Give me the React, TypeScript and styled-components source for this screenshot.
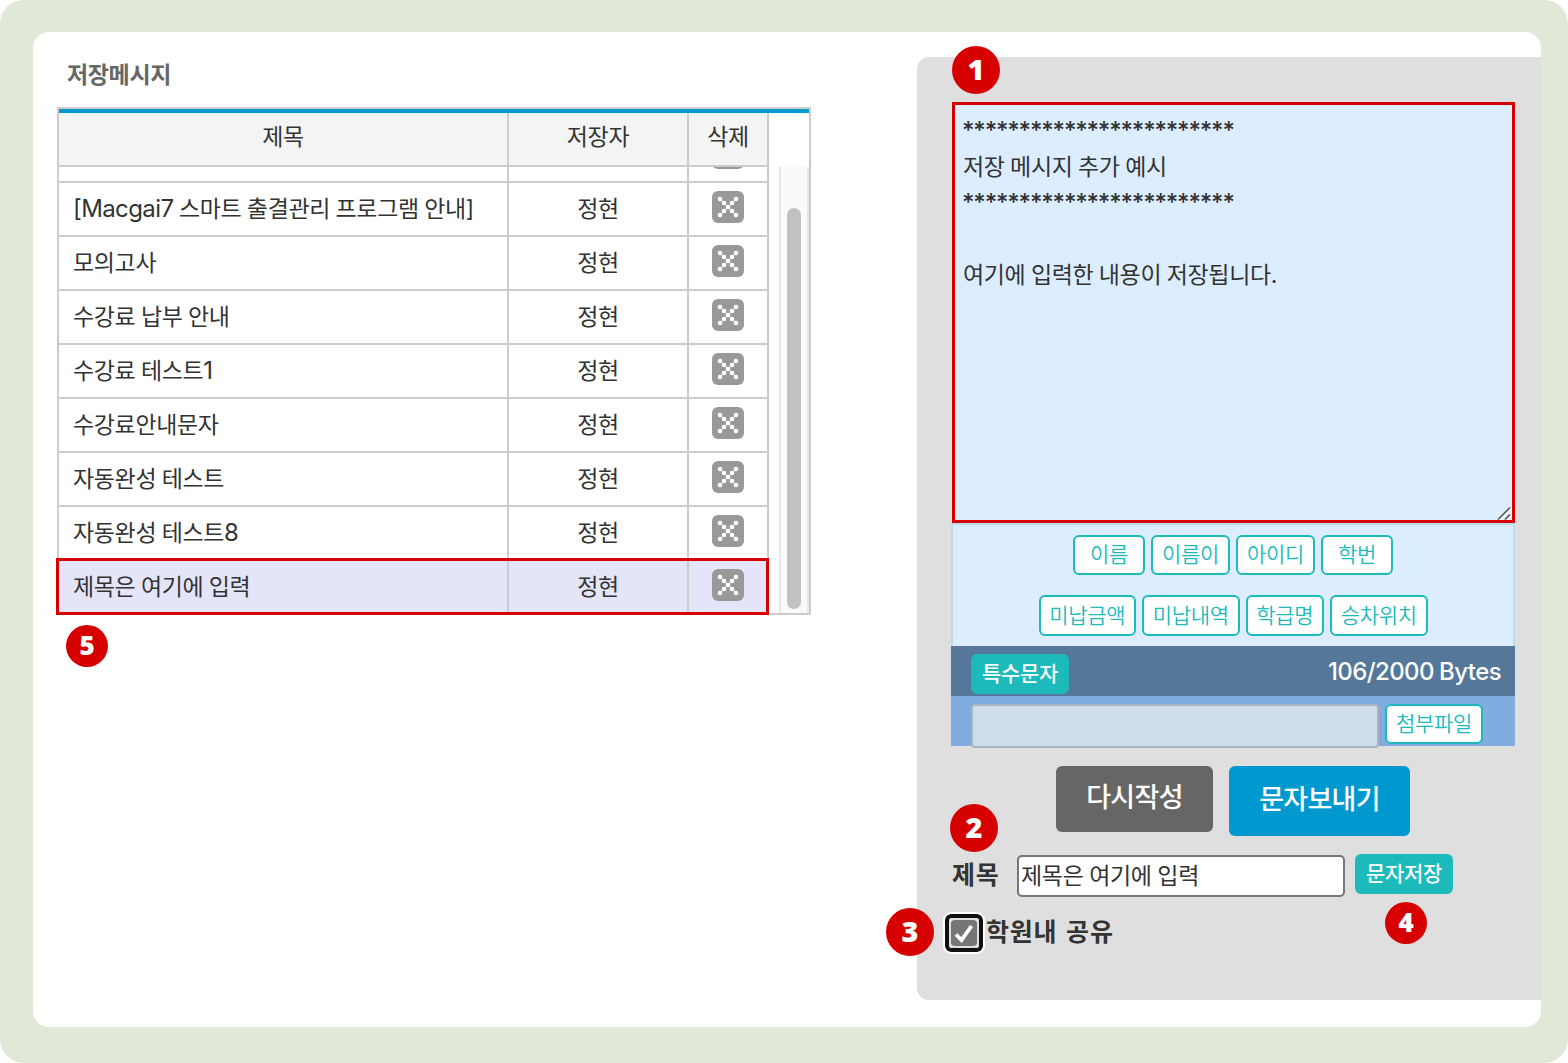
import React from "react";
import styled, { createGlobalStyle, css } from "styled-components";

const GlobalStyle = createGlobalStyle`
  *, *::before, *::after { box-sizing: border-box; }
  body {
    margin: 0;
    background: #fff;
    color: #333;
    font-family: Inter, "Noto Sans CJK KR", sans-serif;
    font-size: 23px;
    letter-spacing: -0.36px;
    word-spacing: -0.6px;
  }
`;

const Page = styled.div`
  width: 1568px;
  height: 1063px;
  padding: 32px 27px 36px 33px;
  background: #e0e9d8;
  border-radius: 24px;
`;

const Card = styled.main`
  display: flex;
  justify-content: space-between;
  height: 995px;
  padding: 25px 0 27px 24px;
  background: #fff;
  border-radius: 16px;
`;

const Saved = styled.section`
  position: relative;
  width: 754px;
`;

const SavedTitle = styled.h2`
  margin: 0;
  padding: 0 0 0 10px;
  height: 50px;
  line-height: 36px;
  font-size: 23px;
  font-weight: 700;
  color: #666;
`;

const TableFrame = styled.div`
  height: 508px;
  border: 2px solid #ccc;
`;

const TopRule = styled.div`
  height: 4px;
  background: #0099cf;
`;

const TableBody = styled.div`
  display: flex;
  justify-content: space-between;
  height: 500px;
`;

const Grid = styled.div`
  width: 710px;
`;

const Row = styled.div<{ $kind?: "head" | "selected" }>`
  position: relative;
  display: grid;
  grid-template-columns: 450px 180px 80px;
  height: 54px;
  background: #fff;

  ${(p) =>
    p.$kind === "head" &&
    css`
      background: #f4f4f4;
      text-align: center;
    `}

  ${(p) =>
    p.$kind === "selected" &&
    css`
      height: 52px;
      background: #e5e5fa;
      &::after {
        content: "";
        position: absolute;
        inset: -3px 0 -2px -3px;
        border: 3px solid #d60000;
      }
    `}
`;

const Cell = styled.div<{ $align?: "left" | "center"; $last?: boolean; $head?: boolean }>`
  display: flex;
  align-items: center;
  justify-content: ${(p) => (p.$align === "left" ? "flex-start" : "center")};
  padding: 0 0 ${(p) => (p.$head ? "4px" : "1px")} ${(p) => (p.$align === "left" ? "14px" : "0")};
  border-right: 2px solid #ccc;
  border-bottom: ${(p) => (p.$last ? "0" : "2px solid #ccc")};
  line-height: 34px;
  white-space: pre;
`;

const ClippedRow = styled.div`
  display: flex;
  align-items: flex-end;
  height: 16px;
  overflow: hidden;
`;

const DeleteButton = styled.button`
  display: block;
  width: 32px;
  height: 32px;
  margin-bottom: 3px;
  padding: 0;
  border: 0;
  background: none;
  svg { display: block; }
`;

const ScrollTrack = styled.div`
  width: 30px;
  height: 446px;
  margin-top: 54px;
  padding: 41px 6px 4px;
  border: solid #e8e8e8;
  border-width: 0 2px;
  background: #fafafa;
`;

const ScrollThumb = styled.div`
  width: 14px;
  height: 401px;
  border-radius: 7px;
  background: #c1c1c1;
`;

const Latin = styled.span<{ $medium?: boolean }>`
  font-size: 24px;
  font-weight: ${(p) => (p.$medium ? 450 : 400)};
  letter-spacing: -0.6px;
`;

const Stars = styled.span`
  margin-left: -1px;
  font-size: 24px;
  font-weight: 500;
  letter-spacing: -1.17px;
`;

const Panel = styled.aside`
  position: relative;
  width: 624px;
  height: 943px;
  padding: 45px 26px 0 34px;
  background: #dfdfdf;
  border-radius: 12px 0 0 12px;
`;

const MessageBox = styled.div`
  position: relative;
  height: 421px;
  margin-left: 1px;
  padding: 8px 8px;
  border: 3px solid #d60000;
  background: #dcedff;
`;

const MessageLine = styled.div`
  height: 36px;
  line-height: 36px;
  white-space: pre;
`;

const Grip = styled.svg`
  position: absolute;
  right: 0;
  bottom: 0;
`;

const TokenArea = styled.div`
  display: flex;
  flex-direction: column;
  gap: 20px;
  height: 123px;
  padding-top: 10px;
  border: 2px solid #bbdcec;
  border-bottom: 0;
  background: #dcedff;
`;

const TokenRow = styled.div`
  display: flex;
  justify-content: center;
  gap: 6px;
`;

const SmallButton = styled.button<{ $width: number; $height?: number; $solid?: boolean }>`
  display: flex;
  flex: none;
  align-items: center;
  justify-content: center;
  width: ${(p) => p.$width}px;
  height: ${(p) => p.$height || 40}px;
  padding: 0;
  border: 2px solid #1cbaba;
  border-radius: 6px;
  background: ${(p) => (p.$solid ? "#1cbaba" : "#fff")};
  color: ${(p) => (p.$solid ? "#fff" : "#1cbaba")};
  font-family: Inter, "Noto Sans CJK KR", sans-serif;
  font-size: 21px;
  font-weight: ${(p) => (p.$solid ? 500 : 350)};
  letter-spacing: -0.3px;
  line-height: 30px;
`;

const CountBar = styled.div`
  display: flex;
  justify-content: space-between;
  height: 50px;
  padding: 8px 14px 0 20px;
  background: #557799;
  color: #fff;
  line-height: 36px;
`;

const AttachBar = styled.div`
  display: flex;
  gap: 6px;
  height: 50px;
  padding: 8px 0 0 20px;
  background: #81acdf;
`;

const AttachInput = styled.input`
  width: 408px;
  height: 44px;
  padding: 0;
  border: 2px solid rgba(118, 118, 118, 0.4);
  border-radius: 4px;
  background: #cfdeed;
`;

const Actions = styled.div`
  display: flex;
  gap: 16px;
  height: 70px;
  margin: 20px 0 0 105px;
`;

const ActionButton = styled.button<{ $primary?: boolean }>`
  width: ${(p) => (p.$primary ? 181 : 157)}px;
  height: ${(p) => (p.$primary ? 70 : 66)}px;
  padding: 0 0 8px;
  border: 0;
  border-radius: 6px;
  background: ${(p) => (p.$primary ? "#0099cf" : "#666")};
  color: #fff;
  font-family: Inter, "Noto Sans CJK KR", sans-serif;
  font-size: 27px;
  font-weight: 500;
  letter-spacing: -0.7px;
`;

const TitleRow = styled.div`
  display: flex;
  height: 44px;
  margin-top: 18px;
`;

const Label = styled.label`
  font-size: 25px;
  font-weight: 700;
  letter-spacing: 0.8px;
  line-height: 42px;
  white-space: pre;
`;

const TitleLabel = styled(Label)`
  width: 66px;
  padding-left: 1px;
`;

const TitleInput = styled.input`
  width: 328px;
  height: 42px;
  margin: 1px 10px 0 0;
  padding: 0 2px 4px;
  border: 2px solid #767676;
  border-radius: 5px;
  background: #fff;
  color: #333;
  font-family: Inter, "Noto Sans CJK KR", sans-serif;
  font-size: 23px;
  letter-spacing: -0.3px;
  word-spacing: -0.6px;
`;

const ShareRow = styled.div`
  display: flex;
  gap: 1px;
  margin: 14px 0 0 -8px;
`;

const ShareLabel = styled(Label)`
  line-height: 41px;
  word-spacing: 2px;
`;

const CheckFocus = styled.span`
  display: flex;
  align-items: center;
  justify-content: center;
  width: 42px;
  height: 42px;
  border: 2px solid #fff;
  border-radius: 8px;
  background: #dfdfdf;
  box-shadow: inset 0 0 0 4px #101010;
`;

const Badge = styled.span<{ $x: number; $y: number; $size?: number }>`
  position: absolute;
  left: ${(p) => p.$x}px;
  top: ${(p) => p.$y}px;
  display: flex;
  align-items: center;
  justify-content: center;
  width: ${(p) => p.$size || 48}px;
  height: ${(p) => p.$size || 48}px;
  padding-bottom: ${(p) => (p.$size ? 2 : 3)}px;
  border-radius: 50%;
  background: #d60000;
  color: #fff;
  font-family: "Open Sans", sans-serif;
  font-size: ${(p) => (p.$size ? 26 : 29)}px;
  font-stretch: 92%;
  font-weight: 800;
  letter-spacing: 0;
  line-height: 1;
`;

const DeleteIcon = () => (
  <svg width="32" height="32" viewBox="0 0 32 32">
    <rect width="32" height="32" rx="6" fill="#999" />
    <path d="M8 8 24 24M24 8 8 24" stroke="#fff" strokeOpacity="0.25" strokeWidth="2" />
    <g fill="#fff">
      {[8, 12, 16, 20, 24].map((p) => (
        <React.Fragment key={p}>
          <circle cx={p} cy={p} r={2.3} />
          {p !== 16 && <circle cx={p} cy={32 - p} r={2.3} />}
        </React.Fragment>
      ))}
    </g>
  </svg>
);

const DeleteCell = ({ last }: { last?: boolean }) => (
  <Cell $last={last}>
    <DeleteButton aria-label="삭제">
      <DeleteIcon />
    </DeleteButton>
  </Cell>
);

const messages: React.ReactNode[] = [
  <span key="m"><Latin>[Macgai7</Latin> 스마트 출결관리 프로그램 안내]</span>,
  "모의고사",
  "수강료 납부 안내",
  <span key="1">수강료 테스트<Latin>1</Latin></span>,
  "수강료안내문자",
  "자동완성 테스트",
  <span key="8">자동완성 테스트<Latin>8</Latin></span>,
  "제목은 여기에 입력",
];

const stars = "*".repeat(24);

export default function App() {
  return (
    <Page>
      <GlobalStyle />
      <Card>
        <Saved>
          <SavedTitle>저장메시지</SavedTitle>
          <TableFrame>
            <TopRule />
            <TableBody>
              <Grid>
                <Row $kind="head">
                  <Cell $head>제목</Cell>
                  <Cell $head>저장자</Cell>
                  <Cell $head>삭제</Cell>
                </Row>
                <ClippedRow>
                  <Row>
                    <Cell />
                    <Cell />
                    <DeleteCell />
                  </Row>
                </ClippedRow>
                {messages.map((m, i) => {
                  const last = i === messages.length - 1;
                  return (
                    <Row key={i} $kind={last ? "selected" : undefined}>
                      <Cell $align="left" $last={last}>{m}</Cell>
                      <Cell $last={last}>정현</Cell>
                      <DeleteCell last={last} />
                    </Row>
                  );
                })}
              </Grid>
              <ScrollTrack>
                <ScrollThumb />
              </ScrollTrack>
            </TableBody>
          </TableFrame>
          <Badge $x={9} $y={568} $size={42}>5</Badge>
        </Saved>

        <Panel>
          <MessageBox>
            <MessageLine><Stars>{stars}</Stars></MessageLine>
            <MessageLine>저장 메시지 추가 예시</MessageLine>
            <MessageLine><Stars>{stars}</Stars></MessageLine>
            <MessageLine />
            <MessageLine>여기에 입력한 내용이 저장됩니다.</MessageLine>
            <Grip width="16" height="14" viewBox="0 0 16 14">
              <path d="M2 14 14 2M9 14l5-5" stroke="#fff" strokeWidth="2" transform="translate(1.5 1)" />
              <path d="M2 13.5 14 1.5M9 13.5l5-5" stroke="#555" strokeWidth="1.6" />
            </Grip>
          </MessageBox>
          <TokenArea>
            <TokenRow>
              <SmallButton $width={72}>이름</SmallButton>
              <SmallButton $width={79}>이름이</SmallButton>
              <SmallButton $width={79}>아이디</SmallButton>
              <SmallButton $width={72}>학번</SmallButton>
            </TokenRow>
            <TokenRow>
              <SmallButton $width={97.5} $height={41}>미납금액</SmallButton>
              <SmallButton $width={97.5} $height={41}>미납내역</SmallButton>
              <SmallButton $width={78.5} $height={41}>학급명</SmallButton>
              <SmallButton $width={97.5} $height={41}>승차위치</SmallButton>
            </TokenRow>
          </TokenArea>
          <CountBar>
            <SmallButton $width={98} $solid>특수문자</SmallButton>
            <Latin $medium>106/2000 Bytes</Latin>
          </CountBar>
          <AttachBar>
            <AttachInput disabled />
            <SmallButton $width={98}>첨부파일</SmallButton>
          </AttachBar>
          <Actions>
            <ActionButton>다시작성</ActionButton>
            <ActionButton $primary>문자보내기</ActionButton>
          </Actions>
          <TitleRow>
            <TitleLabel>제목</TitleLabel>
            <TitleInput defaultValue="제목은 여기에 입력" />
            <SmallButton $width={98} $solid>문자저장</SmallButton>
          </TitleRow>
          <ShareRow>
            <CheckFocus>
              <svg width="26" height="26" viewBox="0 0 26 26">
                <rect width="26" height="26" rx="4" fill="#767676" />
                <path d="M5 14.5l5.5 5.5L20.5 6" fill="none" stroke="#fff" strokeWidth="3.8" />
              </svg>
            </CheckFocus>
            <ShareLabel>학원내 공유</ShareLabel>
          </ShareRow>
          <Badge $x={35} $y={-11}>1</Badge>
          <Badge $x={33} $y={747}>2</Badge>
          <Badge $x={-31} $y={851}>3</Badge>
          <Badge $x={468} $y={845} $size={42}>4</Badge>
        </Panel>
      </Card>
    </Page>
  );
}
